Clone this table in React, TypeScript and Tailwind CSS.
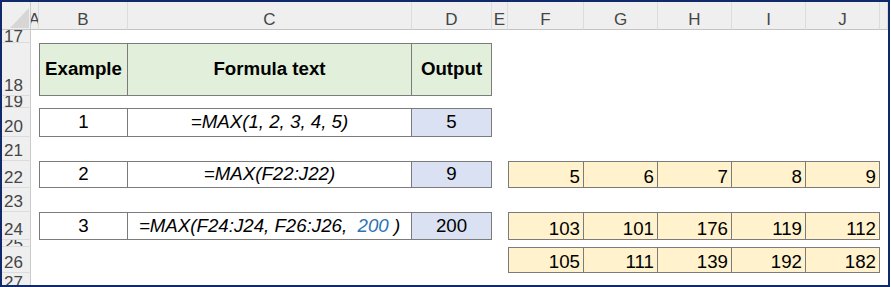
import { ReactNode } from "react";

type Row = {
  num: number;
  tight?: boolean;
  example?: { n: string; formula: ReactNode; out: string; head?: boolean };
  values?: number[];
};

const letters = ["A", "B", "C", "D", "E", "F", "G", "H", "I", "J", ""];

const rows: Row[] = [
  { num: 17, tight: true },
  {
    num: 18,
    example: { n: "Example", formula: "Formula text", out: "Output", head: true },
  },
  { num: 19, tight: true },
  { num: 20, example: { n: "1", formula: "=MAX(1, 2, 3, 4, 5)", out: "5" } },
  { num: 21 },
  {
    num: 22,
    example: { n: "2", formula: "=MAX(F22:J22)", out: "9" },
    values: [5, 6, 7, 8, 9],
  },
  { num: 23 },
  {
    num: 24,
    example: {
      n: "3",
      formula: (
        <>
          <span>{"=MAX(F24:J24, F26:J26,  "}</span>
          <span className="text-[#2e75b6]">200</span>
          <span>{" )"}</span>
        </>
      ),
      out: "200",
    },
    values: [103, 101, 176, 119, 112],
  },
  { num: 25, tight: true },
  { num: 26, values: [105, 111, 139, 192, 182] },
  { num: 27 },
];

const line = "border-[#7b7b7b]";

const ExampleCells = ({ ex }: { ex?: Row["example"] }) => {
  if (!ex)
    return (
      <>
        <div />
        <div />
        <div />
      </>
    );
  const base = "flex items-center justify-center overflow-hidden whitespace-pre";
  const fill = ex.head ? "bg-[#e2efda] font-bold" : "";
  return (
    <>
      <div className={`${base} ${fill} border ${line}`}>{ex.n}</div>
      <div className={`${base} ${fill} border-y border-r ${line} ${ex.head ? "" : "italic"}`}>
        {ex.formula}
      </div>
      <div className={`${base} border-y border-r ${line} ${ex.head ? fill : "bg-[#d9e1f2]"}`}>
        {ex.out}
      </div>
    </>
  );
};

const ValueCells = ({ values }: { values?: number[] }) => {
  if (!values)
    return (
      <>
        {[0, 1, 2, 3, 4].map((i) => (
          <div key={i} />
        ))}
      </>
    );
  return (
    <>
      {values.map((v, i) => (
        <div
          key={i}
          className={`flex items-end justify-end pr-[3px] bg-[#fff2cc] ${line} ${
            i === 0 ? "border" : "border-y border-r"
          }`}
        >
          {v}
        </div>
      ))}
    </>
  );
};

export default function App() {
  return (
    <div className="w-[890px] h-[287px] border-2 border-[#10296a] bg-white overflow-hidden font-['Liberation_Sans',Arial,sans-serif] text-black">
      <div className="grid grid-cols-[29px_8px_89px_284px_80px_16px_76px_74px_74px_74px_74px_1fr] grid-rows-[28px_13px_53px_12px_29px_24px_27px_24px_28px_7px_26px_20px] text-[18.7px] leading-none">
        {/* column headings */}
        <div className="relative bg-[#efefef] border-r border-b border-r-[#cacaca] border-b-[#c4c4c4]">
          <svg className="absolute left-[8px] top-[6px]" width="19" height="20" viewBox="0 0 19 20">
            <polygon points="0,20 19,0 19,20" fill="#d6d6d6" />
          </svg>
        </div>
        {letters.map((l, i) => (
          <div
            key={i}
            className="flex items-center justify-center pt-[7px] overflow-hidden bg-[#efefef] border-r border-b border-r-[#dcdcdc] border-b-[#c4c4c4] text-[17px] text-[#454545]"
          >
            {l}
          </div>
        ))}

        {rows.map((r) => (
          <div key={r.num} className="contents">
            <div
              className={`flex pl-[2px] overflow-hidden bg-[#efefef] border-r border-b border-r-[#cacaca] border-b-[#dcdcdc] text-[17px] text-[#454545] ${
                r.tight ? "items-center" : "items-end pb-[1px]"
              }`}
            >
              {r.num}
            </div>
            <div />
            <ExampleCells ex={r.example} />
            <div />
            <ValueCells values={r.values} />
            <div />
          </div>
        ))}
      </div>
    </div>
  );
}
